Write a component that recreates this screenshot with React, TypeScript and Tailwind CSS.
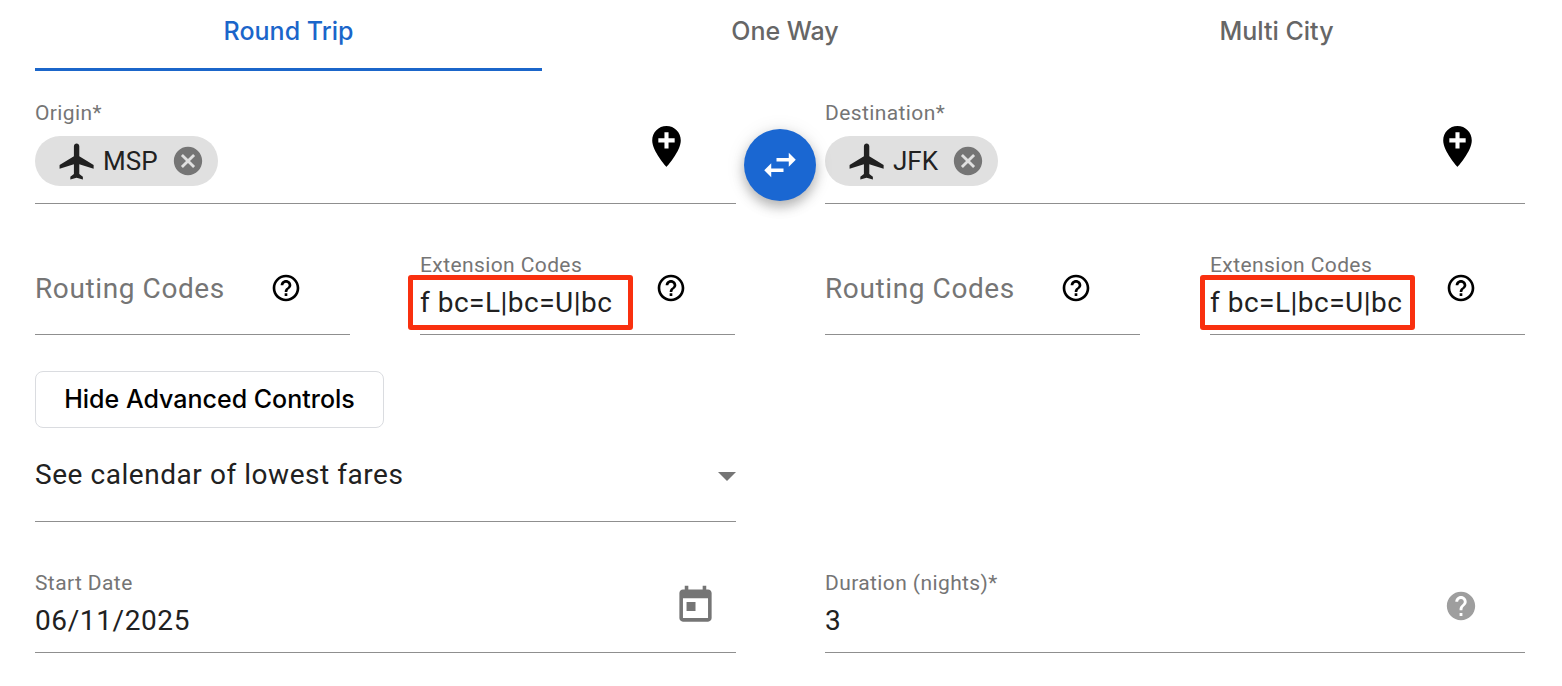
import React from "react";

const ICONS = {
  flight: "M21 16v-2l-8-5V3.5c0-.83-.67-1.5-1.5-1.5S10 2.67 10 3.5V9l-8 5v2l8-2.5V19l-2 1.5V22l3.5-1 3.5 1v-1.5L13 19v-5.5l8 2.5z",
  cancel: "M12 2C6.47 2 2 6.47 2 12s4.47 10 10 10 10-4.47 10-10S17.53 2 12 2zm5 13.59L15.59 17 12 13.41 8.41 17 7 15.59 10.59 12 7 8.41 8.41 7 12 10.59 15.59 7 17 8.41 13.41 12 17 15.59z",
  addLocation: "M12 2C8.14 2 5 5.14 5 9c0 5.25 7 13 7 13s7-7.75 7-13c0-3.86-3.14-7-7-7zm4 8h-3v3h-2v-3H8V8h3V5h2v3h3v2z",
  swap: "M6.99 11L3 15l3.99 4v-3H14v-2H6.99v-3zM21 9l-3.99-4v3H10v2h7.01v3L21 9z",
  helpOutline: "M11 18h2v-2h-2v2zm1-16C6.48 2 2 6.48 2 12s4.48 10 10 10 10-4.48 10-10S17.52 2 12 2zm0 18c-4.41 0-8-3.59-8-8s3.59-8 8-8 8 3.59 8 8-3.59 8-8 8zm0-14c-2.21 0-4 1.79-4 4h2c0-1.1.9-2 2-2s2 .9 2 2c0 2-3 1.75-3 5h2c0-2.25 3-2.5 3-5 0-2.21-1.79-4-4-4z",
  help: "M12 2C6.48 2 2 6.48 2 12s4.48 10 10 10 10-4.48 10-10S17.52 2 12 2zm1 17h-2v-2h2v2zm2.07-7.75l-.9.92C13.45 12.9 13 13.5 13 15h-2v-.5c0-1.1.45-2.1 1.17-2.83l1.24-1.26c.37-.36.59-.86.59-1.41 0-1.1-.9-2-2-2s-2 .9-2 2H8c0-2.21 1.79-4 4-4s4 1.79 4 4c0 .88-.36 1.68-.93 2.25z",
  today: "M19 3h-1V1h-2v2H8V1H6v2H5c-1.11 0-1.99.9-1.99 2L3 19c0 1.1.89 2 2 2h14c1.1 0 2-.9 2-2V5c0-1.1-.9-2-2-2zm0 16H5V8h14v11zM7 10h5v5H7z",
};

const Icon = ({ d, className }: { d: string; className: string }) => (
  <svg viewBox="0 0 24 24" fill="currentColor" className={className}>
    <path d={d} />
  </svg>
);

const AirportField = ({ label, code, pinClass }: { label: string; code: string; pinClass: string }) => (
  <div className="flex items-start h-[104px] border-b border-[#8f8f8f]">
    <div className="flex-1">
      <div className="text-[21px] leading-[27px] tracking-[0.4px] text-[#757575]">{label}</div>
      <div className="mt-[9px] inline-flex items-center h-[50px] rounded-full bg-[#e0e0e0] pl-[21px] pr-[13px] text-[#212121]">
        <Icon d={ICONS.flight} className="w-[43px] h-[43px] shrink-0" />
        <span className="ml-[4px] text-[26px] leading-none">{code}</span>
        <Icon d={ICONS.cancel} className="ml-[13px] w-[34px] h-[34px] text-[#757575]" />
      </div>
    </div>
    <Icon d={ICONS.addLocation} className={pinClass} />
  </div>
);

// the red highlight is not the same size on both sides of the form
const CodesFields = ({ boxClass }: { boxClass: string }) => (
  <div className="grid grid-cols-[315px_315px] gap-x-[70px] mt-[48px]">
    <div className="flex items-center justify-between h-[83px] border-b border-[#8f8f8f] pr-[48px] pb-[10px]">
      <span className="text-[28px] tracking-[0.6px] text-[#757575] pt-[2px]">Routing Codes</span>
      <Icon d={ICONS.helpOutline} className="w-[32px] h-[32px] text-black" />
    </div>
    <div className="relative flex items-start justify-between h-[83px] border-b border-[#8f8f8f] pr-[48px]">
      <div>
        <div className="text-[21px] leading-[27px] tracking-[0.4px] text-[#757575]">Extension Codes</div>
        <div className="mt-[5px] text-[28px] leading-[38px] tracking-[0.5px] text-[#212121] whitespace-nowrap">f bc=L|bc=U|bc</div>
      </div>
      <Icon d={ICONS.helpOutline} className="mt-[20px] w-[32px] h-[32px] text-black" />
      <div className={boxClass} />
    </div>
  </div>
);

const DateField = ({ label, value, children }: { label: string; value: string; children: React.ReactNode }) => (
  <div className="flex items-start justify-between h-[82px] border-b border-[#8f8f8f]">
    <div>
      <div className="text-[21px] leading-[25px] tracking-[0.4px] text-[#757575]">{label}</div>
      <div className="mt-[7px] text-[28px] leading-[36px] tracking-[0.6px] text-[#212121]">{value}</div>
    </div>
    {children}
  </div>
);

export default function App() {
  return (
    <div className="relative w-[1562px] h-[686px] bg-white overflow-hidden pl-[35px] font-['Roboto',sans-serif]">
      <div className="grid grid-cols-[507px_486px_497px] h-[71px] text-[25px] font-medium font-['Inter',sans-serif]">
        <div className="flex items-center justify-center pb-[4px] border-b-[3px] border-[#1b66ca] text-[#1b66ca]">Round Trip</div>
        <div className="flex items-center justify-center pb-[7px] text-[#666666]">One Way</div>
        <div className="flex items-center justify-center pb-[7px] text-[#666666]">Multi City</div>
      </div>

      <div className="grid grid-cols-[701px_700px] gap-x-[89px] mt-[29px]">
        <div>
          <AirportField label="Origin*" code="MSP" pinClass="mt-[22px] mr-[45px] w-[49px] h-[49px] text-black" />
          <CodesFields boxClass="absolute left-[-12px] top-[23px] w-[225px] h-[55px] rounded-[3px] border-[5px] border-[#f9300f]" />
        </div>
        <div>
          <AirportField label="Destination*" code="JFK" pinClass="mt-[22px] mr-[43px] w-[49px] h-[49px] text-black" />
          <CodesFields boxClass="absolute left-[-10px] top-[23px] w-[215px] h-[55px] rounded-[3px] border-[5px] border-[#f9300f]" />
        </div>
      </div>

      <button className="mt-[36px] block w-[349px] h-[57px] rounded-[8px] border border-[#dadce0] bg-white text-[25px] font-medium font-['Inter',sans-serif] text-black">
        Hide Advanced Controls
      </button>

      <div className="flex items-center justify-between w-[701px] h-[94px] border-b border-[#8f8f8f] text-[28px] tracking-[0.55px] text-[#212121]">
        <span>See calendar of lowest fares</span>
        <svg viewBox="7 10 10 5" className="mt-[4px] w-[18px] h-[9px] text-[#757575]" fill="currentColor">
          <path d="M7 10l5 5 5-5z" />
        </svg>
      </div>

      <div className="grid grid-cols-[701px_700px] gap-x-[89px] mt-[49px]">
        <DateField label="Start Date" value="06/11/2025">
          <Icon d={ICONS.today} className="mt-[13px] mr-[19px] w-[43px] h-[43px] text-[#757575]" />
        </DateField>
        <DateField label="Duration (nights)*" value="3">
          <Icon d={ICONS.help} className="mt-[18px] mr-[47px] w-[34px] h-[34px] text-[#9e9e9e]" />
        </DateField>
      </div>

      <button className="absolute left-[744px] top-[129px] flex items-center justify-center w-[72px] h-[72px] rounded-full bg-[#1a67d2] text-white shadow-[0_6px_12px_rgba(0,0,0,0.25),0_2px_20px_rgba(0,0,0,0.1)]">
        <Icon d={ICONS.swap} className="w-[42px] h-[42px]" />
      </button>
    </div>
  );
}
